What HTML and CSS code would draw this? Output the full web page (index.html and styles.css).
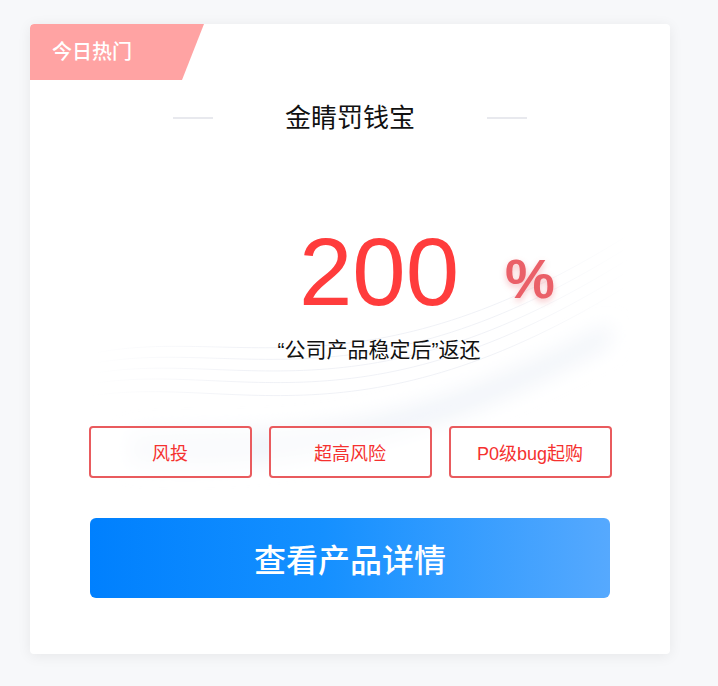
FILE: index.html
```html
<!DOCTYPE html>
<html lang="zh-CN">
<head>
<meta charset="utf-8">
<title>今日热门</title>
<link rel="stylesheet" href="styles.css">
</head>
<body>
<div class="page">
  <div class="card">
    <svg class="swoosh" width="640" height="630" viewBox="0 0 640 630" aria-hidden="true">
      <defs>
        <linearGradient id="fade" x1="0" y1="0" x2="1" y2="0">
          <stop offset="0" stop-color="#eceef4" stop-opacity="0"/>
          <stop offset="0.3" stop-color="#eceef4" stop-opacity="0.8"/>
          <stop offset="0.75" stop-color="#eceef4" stop-opacity="0.8"/>
          <stop offset="1" stop-color="#eceef4" stop-opacity="0"/>
        </linearGradient>
        <filter id="soft" x="-20%" y="-50%" width="140%" height="200%">
          <feGaussianBlur stdDeviation="10"/>
        </filter>
      </defs>
      <g fill="none" stroke="url(#fade)" stroke-width="1">
        <path d="M60 330 C 200 300, 330 380, 600 210"/>
        <path d="M60 340 C 200 312, 330 392, 600 222"/>
        <path d="M60 350 C 200 324, 330 404, 600 234"/>
        <path d="M60 360 C 200 336, 330 416, 600 246"/>
        <path d="M60 372 C 200 350, 330 428, 600 260"/>
      </g>
      <path d="M100 410 C 240 400, 330 430, 580 300 L 580 320 C 400 420, 260 450, 100 440 Z" fill="#f1f4f9" filter="url(#soft)"/>
    </svg>
    <div class="badge">今日热门</div>
    <div class="title-row">
      <span class="rule"></span>
      <h1 class="title">金睛罚钱宝</h1>
      <span class="rule"></span>
    </div>
    <div class="rate"><span class="num">200<span class="pct">%</span></span></div>
    <p class="desc">“公司产品稳定后”返还</p>
    <div class="tags">
      <span class="tag">风投</span>
      <span class="tag">超高风险</span>
      <span class="tag">P0级bug起购</span>
    </div>
    <a class="btn" href="#">查看产品详情</a>
  </div>
</div>
</body>
</html>
```
FILE: styles.css
```css
* { box-sizing: border-box; }
html, body {
  margin: 0;
  padding: 0;
  background: #f7f8fa;
  font-family: "Liberation Sans", "Noto Sans CJK SC", sans-serif;
}
.page {
  padding: 24px 48px 32px 30px;
}
.card {
  position: relative;
  width: 640px;
  background: #fff;
  border-radius: 4px;
  box-shadow: 0 2px 14px rgba(0, 0, 0, 0.07);
  padding-bottom: 56px;
  overflow: hidden;
}
.swoosh {
  position: absolute;
  left: 0;
  top: 0;
  pointer-events: none;
}
.badge {
  position: relative;
  width: 174px;
  height: 56px;
  line-height: 56px;
  padding-left: 22px;
  background: #ffa3a3;
  color: #fff;
  font-size: 20px;
  font-weight: 500;
  clip-path: polygon(0 0, 100% 0, calc(100% - 22px) 100%, 0 100%);
  border-top-left-radius: 4px;
}
.title-row {
  position: relative;
  display: flex;
  align-items: center;
  justify-content: center;
  gap: 72px;
  margin-top: 20px;
  height: 36px;
}
.rule {
  width: 40px;
  height: 2px;
  background: #e8e9ee;
}
.title {
  margin: 0;
  font-size: 26px;
  font-weight: normal;
  line-height: 36px;
  color: #111;
}
.rate {
  position: relative;
  margin-top: 88px;
  height: 96px;
  line-height: 96px;
  text-align: center;
  padding-left: 58px;
  white-space: nowrap;
}
.num {
  position: relative;
  display: inline-block;
  font-size: 96px;
  color: #ff3c3c;
  vertical-align: top;
}
.pct {
  position: absolute;
  left: calc(100% + 46px);
  top: 27px;
  font-size: 56px;
  line-height: 56px;
  font-weight: bold;
  color: #ea6068;
  text-shadow: 0 3px 6px rgba(230, 80, 90, 0.35);
}
.desc {
  position: relative;
  margin: 16px 0 0;
  padding-left: 58px;
  text-align: center;
  font-size: 21px;
  line-height: 28px;
  color: #111;
}
.tags {
  position: relative;
  display: flex;
  justify-content: center;
  gap: 17px;
  margin-top: 62px;
}
.tag {
  width: 163px;
  height: 52px;
  border: 2px solid #e95b5e;
  border-radius: 4px;
  display: flex;
  align-items: center;
  justify-content: center;
  font-size: 18px;
  color: #f5312f;
  background: rgba(255, 255, 255, 0.6);
}
.btn {
  position: relative;
  display: flex;
  align-items: center;
  justify-content: center;
  width: 520px;
  height: 80px;
  margin: 40px auto 0;
  border-radius: 6px;
  background: linear-gradient(90deg, #0080fe 0%, #1590ff 45%, #56a9fe 100%);
  color: #fff;
  font-size: 32px;
  font-weight: 500;
  text-decoration: none;
}
```
